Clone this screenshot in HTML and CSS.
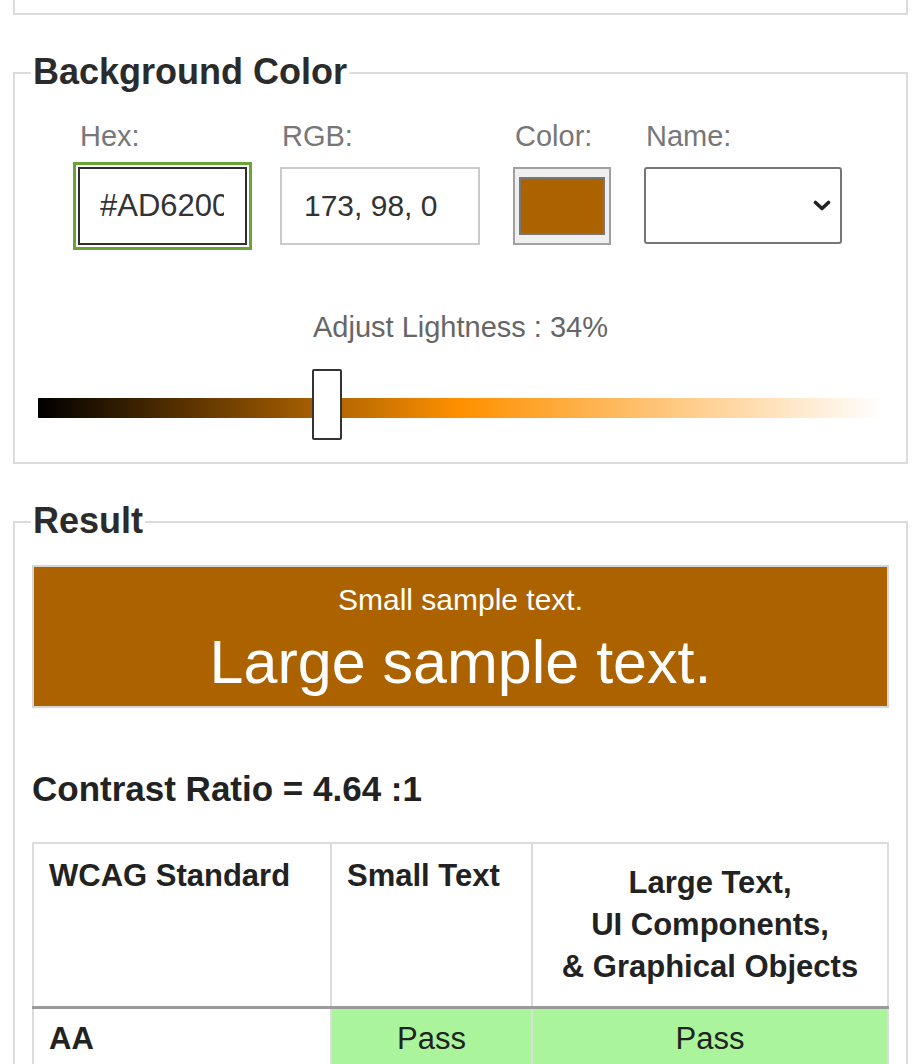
FILE: index.html
```html
<!DOCTYPE html>
<html lang="en">
<head>
<meta charset="utf-8">
<title>Contrast Checker</title>
<link rel="stylesheet" href="styles.css">
</head>
<body>
<div class="prev"></div>

<fieldset class="panel panel-bg">
  <legend class="panel-title">Background Color</legend>
  <div class="fields">
    <div class="field field-hex">
      <label class="lbl" for="hex">Hex:</label>
      <input id="hex" class="inp inp-hex" type="text" value="#AD6200">
    </div>
    <div class="field field-rgb">
      <label class="lbl" for="rgb">RGB:</label>
      <input id="rgb" class="inp inp-rgb" type="text" value="173, 98, 0">
    </div>
    <div class="field field-color">
      <span class="lbl">Color:</span>
      <div class="swatch"><div class="swatch-fill"></div></div>
    </div>
    <div class="field field-name">
      <span class="lbl">Name:</span>
      <div class="select">
        <svg class="chev" width="18" height="12" viewBox="0 0 18 12"><path d="M2.5 2.5 L9 8.5 L15.5 2.5" fill="none" stroke="#222" stroke-width="3.6" stroke-linecap="round" stroke-linejoin="round"/></svg>
      </div>
    </div>
  </div>
  <p class="adjust">Adjust Lightness : 34%</p>
  <div class="slider">
    <div class="track"></div>
    <div class="thumb"></div>
  </div>
</fieldset>

<fieldset class="panel panel-result">
  <legend class="panel-title">Result</legend>
  <div class="sample">
    <div class="sample-small">Small sample text.</div>
    <div class="sample-large">Large sample text.</div>
  </div>
  <h3 class="ratio">Contrast Ratio = 4.64 :1</h3>
  <table class="wcag">
    <thead>
      <tr>
        <th class="c1">WCAG Standard</th>
        <th class="c2">Small Text</th>
        <th class="c3">Large Text,<br>UI Components,<br>&amp; Graphical Objects</th>
      </tr>
    </thead>
    <tbody>
      <tr>
        <th class="c1 rowhead">AA</th>
        <td class="pass">Pass</td>
        <td class="pass">Pass</td>
      </tr>
    </tbody>
  </table>
</fieldset>
</body>
</html>
```

FILE: styles.css
```css
html, body {
  background: #fff;
}
body {
  margin: 0;
  padding: 0 7px 0 13px;
  font-family: "Liberation Sans", Arial, sans-serif;
  color: #222;
}

.prev {
  height: 13px;
  border: 2px solid #dcdcdc;
  border-top: none;
}

.panel {
  margin: 36px 0 0;
  padding: 0 16px 22px;
  border: 2px solid #dcdcdc;
  min-width: 0;
}
.panel-title {
  padding: 0 2px 3px;
  font-size: 36px;
  line-height: 41px;
  font-weight: bold;
  color: #2b2b2b;
}

/* inputs row */
.fields {
  display: flex;
  gap: 33px;
  margin: 25px 0 0 47px;
}
.field {
  display: flex;
  flex-direction: column;
}
.lbl {
  display: block;
  font-size: 29px;
  line-height: 32px;
  color: #777;
  margin: 0 0 15px 2px;
}
.inp {
  box-sizing: border-box;
  height: 78px;
  margin: 0;
  font-family: "Liberation Sans", Arial, sans-serif;
  font-size: 30px;
  color: #333;
  background: #fff;
}
.inp-hex {
  width: 169px;
  padding: 0 21px 0 20px;
  border: 2px solid #2e2e2e;
  outline: 3px solid #6aa436;
  outline-offset: 2px;
  font-size: 31px;
}
.inp-rgb {
  width: 200px;
  padding: 0 22px;
  border: 2px solid #cacaca;
}
.swatch {
  box-sizing: border-box;
  width: 98px;
  height: 78px;
  padding: 8px 4px;
  border: 2px solid #a0a0a0;
  background: #efefef;
}
.swatch-fill {
  box-sizing: border-box;
  height: 100%;
  border: 2px solid #777;
  background: #ad6200;
}
.select {
  box-sizing: border-box;
  width: 198px;
  height: 77px;
  border: 2px solid #767676;
  border-radius: 3px;
  background: #fff;
  display: flex;
  align-items: center;
  justify-content: flex-end;
  padding-right: 9px;
}
.chev {
  display: block;
}

/* lightness slider */
.adjust {
  margin: 66px 0 0;
  text-align: center;
  font-size: 29px;
  line-height: 32px;
  color: #666;
}
.slider {
  position: relative;
  box-sizing: border-box;
  height: 71px;
  margin: 26px 7px 0;
  padding-top: 29px;
}
.track {
  height: 20px;
  background: linear-gradient(to right, #000 0%, hsl(34, 100%, 50%) 50%, #fff 100%);
}
.thumb {
  position: absolute;
  left: 274px;
  top: 0;
  box-sizing: border-box;
  width: 30px;
  height: 71px;
  border: 2px solid #333;
  border-radius: 2px;
  background: #fff;
}

/* result */
.sample {
  margin: 21px 1px 0;
  border: 2px solid #d6d6d6;
  background: #ad6200;
  color: #fff;
  text-align: center;
  padding: 16px 0 9px;
}
.sample-small {
  font-size: 30px;
  line-height: 34px;
}
.sample-large {
  margin-top: 10px;
  font-size: 61px;
  line-height: 70px;
}
.ratio {
  margin: 61px 0 0 1px;
  font-size: 35px;
  line-height: 40px;
  font-weight: bold;
  color: #222;
}

.wcag {
  margin: 33px 1px 0;
  width: calc(100% - 2px);
  border-collapse: collapse;
  border: 2px solid #dcdcdc;
  font-size: 31px;
  line-height: 42px;
  color: #222;
}
.wcag th,
.wcag td {
  border: 2px solid #dcdcdc;
  padding: 9px 15px;
  vertical-align: top;
}
.wcag thead th {
  padding-top: 11px;
  border-bottom: 3px solid #9a9a9a;
}
.wcag th {
  font-weight: bold;
  text-align: left;
}
.wcag .c1 { width: 266px; }
.wcag .c2 { width: 169px; }
.wcag thead .c3 {
  text-align: center;
  padding: 18px 15px;
}
.wcag .pass {
  background: #aaf59c;
  text-align: center;
  font-weight: normal;
  border-left-color: #b5b5b5;
}
```
